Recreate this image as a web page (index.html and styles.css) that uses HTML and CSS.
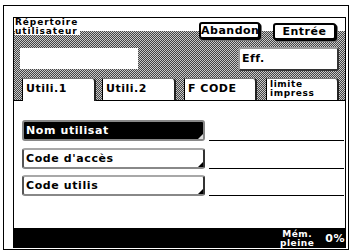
FILE: index.html
```html
<!DOCTYPE html>
<html>
<head>
<meta charset="utf-8">
<link rel="stylesheet" href="styles.css">
</head>
<body>
<div class="frame">
  <div class="panel">
    <div class="top">
      <div class="row1">
        <div class="title">Répertoire<br>utilisateur</div>
        <div class="actions">
          <div class="btn abandon">Abandon</div>
          <div class="btn entree">Entrée</div>
        </div>
      </div>
      <div class="row2">
        <div class="field"></div>
        <div class="eff">Eff.</div>
      </div>
      <div class="tabs">
        <div class="tab active t1">Utili.1</div>
        <div class="tab t2">Utili.2</div>
        <div class="tab t3">F CODE</div>
        <div class="tab t4 two">limite<br>impress</div>
      </div>
    </div>
    <div class="content">
      <div class="row r1">
        <div class="key dark">Nom utilisat</div>
        <div class="line"></div>
      </div>
      <div class="row r2">
        <div class="key">Code d'accès</div>
        <div class="line"></div>
      </div>
      <div class="row r3">
        <div class="key">Code utilis</div>
        <div class="line"></div>
      </div>
    </div>
    <div class="status">
      <div class="mem">Mém.<br>pleine</div>
      <div class="pct">0%</div>
    </div>
  </div>
</div>
</body>
</html>
```

FILE: styles.css
```css
html, body {
  margin: 0;
  padding: 0;
  background: #fff;
}
body {
  font-family: "DejaVu Sans", sans-serif;
  font-weight: bold;
  color: #000;
}
.frame {
  margin: 5px 0 0 3px;
  width: 346px;
  height: 245px;
  box-sizing: border-box;
  border: 1px solid #000;
  padding: 11px 2px 1px 9px;
  display: flex;
}
.panel {
  flex: 1;
  display: flex;
  flex-direction: column;
  border: 1px solid #000;
  border-bottom: 0;
}
.top {
  height: 82px;
  flex: none;
  display: flex;
  flex-direction: column;
  background:
    linear-gradient(#fff, #fff) 0 0 / 100% 13px no-repeat,
    repeating-conic-gradient(#444 0 25%, #c8c8c8 0 50%) 0 0 / 2px 2px;
}
.row1 {
  height: 29px;
  display: flex;
  align-items: flex-start;
}
.title {
  margin-left: 1px;
  padding-right: 2px;
  background: #fff;
  font-size: 9px;
  line-height: 8.5px;
  letter-spacing: 0.9px;
  height: 17px;
}
.actions {
  margin-left: auto;
  margin-right: 9px;
  display: flex;
  align-items: flex-start;
}
.btn {
  box-sizing: border-box;
  border: 2px solid #000;
  border-radius: 3px;
  background: #fff;
  font-size: 11px;
  line-height: 13px;
  letter-spacing: 0.5px;
  text-align: center;
  box-shadow: 1px 1px 0 #000, 2px 2px 0 #777;
}
.abandon {
  margin-top: 4px;
  width: 61px;
  height: 17px;
}
.entree {
  margin-top: 5px;
  margin-left: 13px;
  width: 63px;
  height: 17px;
}
.row2 {
  height: 24px;
  display: flex;
  align-items: flex-start;
}
.field {
  margin-left: 6px;
  margin-top: 1px;
  width: 118px;
  height: 21px;
  background: #fff;
}
.eff {
  margin-left: auto;
  margin-right: 6px;
  width: 101px;
  height: 24px;
  box-sizing: border-box;
  background: #fff;
  border: 2px solid #9a9a9a;
  border-right-color: #333;
  border-bottom-color: #333;
  border-radius: 3px;
  font-size: 11px;
  line-height: 19px;
  letter-spacing: 0.5px;
  padding-left: 2px;
}
.tabs {
  margin-top: 7px;
  height: 22px;
  display: flex;
  align-items: flex-start;
}
.tab {
  box-sizing: border-box;
  height: 22px;
  background: #fff;
  border: 1px solid #777;
  border-left: 1px solid #000;
  border-right: 2px solid #222;
  border-bottom: 0;
  border-radius: 0 4px 0 0;
  font-size: 11px;
  line-height: 15px;
  letter-spacing: 0.5px;
  padding: 2px 0 0 3px;
}
.tab.active {
  height: 23px;
  margin-bottom: -1px;
  position: relative;
  z-index: 1;
}
.t1 { margin-left: 8px; width: 74px; }
.t2 { margin-left: 6px; width: 74px; }
.t3 { margin-left: 8px; width: 73px; }
.t4 { margin-left: 9px; width: 73px; }
.tab.two {
  font-size: 9px;
  line-height: 9px;
  letter-spacing: 0.6px;
  padding-top: 1px;
}
.content {
  flex: none;
  background: #fff;
  border-top: 1px solid #000;
  padding-top: 19px;
  height: 108px;
}
.row {
  display: flex;
  align-items: flex-end;
}
.r2 { margin-top: 7px; }
.r3 { margin-top: 6px; }
.key {
  position: relative;
  margin-left: 8px;
  width: 183px;
  height: 21px;
  box-sizing: border-box;
  background: #fff;
  border: 2px solid #a8a8a8;
  border-left-color: #555;
  border-right-color: #333;
  border-bottom-color: #888;
  border-radius: 3px;
  font-size: 11px;
  line-height: 17px;
  letter-spacing: 0.6px;
  padding-left: 2px;
}
.key::after {
  content: "";
  position: absolute;
  right: 0;
  bottom: 0;
  width: 0;
  height: 0;
  border-style: solid;
  border-width: 0 0 5px 5px;
  border-color: transparent transparent #000 transparent;
}
.key.dark {
  background: #000;
  color: #fff;
  border-color: #888;
}
.key.dark::after {
  border-color: transparent transparent #ddd transparent;
}
.line {
  flex: 1;
  margin-left: 4px;
  margin-right: 1px;
  height: 1px;
  background: #000;
}
.status {
  flex: none;
  height: 20px;
  margin: 0 -1px;
  background: #000;
  color: #fff;
  display: flex;
  align-items: center;
  justify-content: flex-end;
}
.mem {
  font-size: 9px;
  line-height: 9px;
  letter-spacing: 0.5px;
  text-align: center;
  margin-right: 11px;
  padding-top: 1px;
}
.pct {
  font-size: 11px;
  margin-right: 1px;
  letter-spacing: 0.5px;
}
```
